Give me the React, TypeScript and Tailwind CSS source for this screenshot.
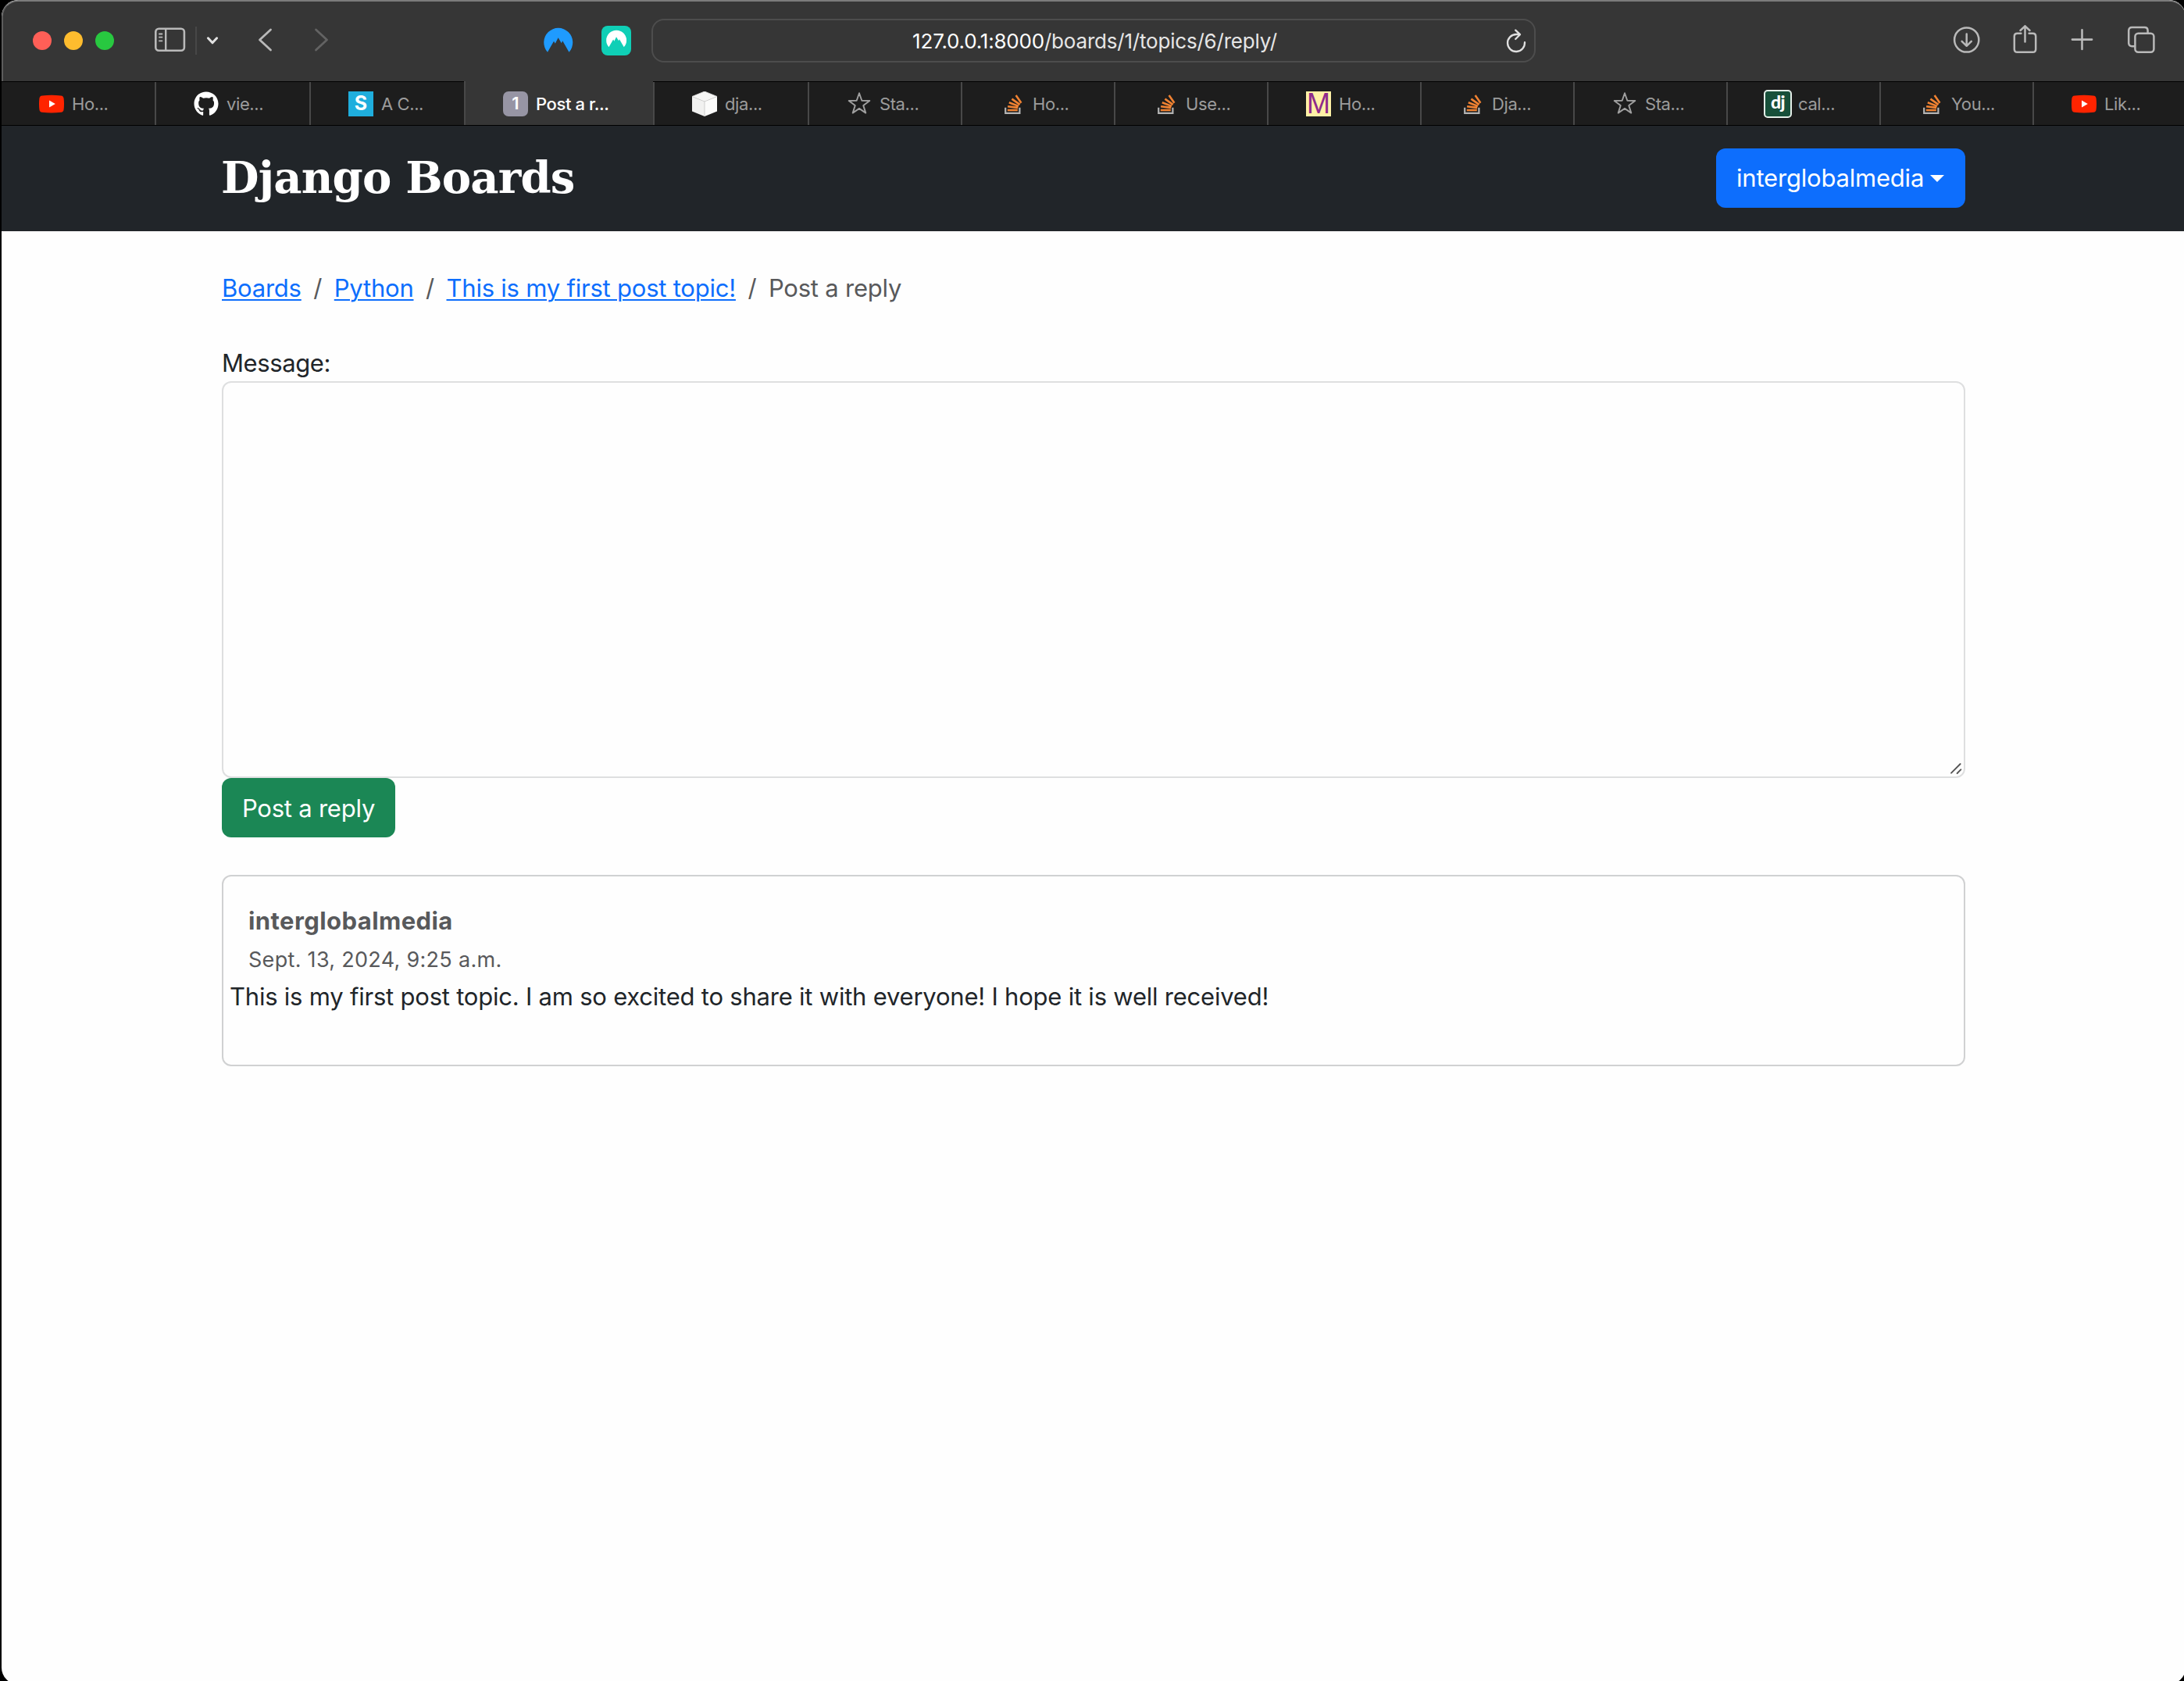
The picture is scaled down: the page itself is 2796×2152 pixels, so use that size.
import type { ReactNode } from "react";
import { FaGithub } from "react-icons/fa";

const NORD_PATH =
  "M5 30.7A18.5 18.5 0 1 1 32.5 30.7L24.2 16.3L22.8 19.2L18.6 12.2L14.8 19.8L13 16.7Z";

function YouTubeIcon() {
  return (
    <svg viewBox="0 0 32 32" className="size-8">
      <path d="M4 5.4Q16 4 28 5.4Q31.2 5.8 31.6 9Q32.4 16 31.6 23Q31.2 26.4 28 26.8Q16 28.2 4 26.8Q.8 26.4 .4 23Q-.4 16 .4 9Q.8 5.8 4 5.4Z" fill="#ff2400" />
      <path d="M13 11.4L20.8 16L13 20.6Z" fill="#fff" />
    </svg>
  );
}

function StarIcon() {
  return (
    <svg viewBox="0 0 32 32" className="size-8" fill="none" stroke="#a0a0a0" strokeWidth="1.9" strokeLinejoin="round">
      <path d="M16 2.2L19.3 11.8L29.3 12L21.3 18.1L24.3 27.6L16 21.9L7.7 27.6L10.7 18.1L2.7 12L12.7 11.8Z" />
    </svg>
  );
}

function StackIcon() {
  return (
    <svg viewBox="0 0 32 32" className="size-8" fill="none" strokeWidth="2.6">
      <path d="M7.2 20.8V27.9H25.4V20.8" stroke="#b4b4b4" strokeWidth="2.2" />
      <path
        d="M9.8 24H22.8M10.1 19.2L23.2 20.9M11.8 14.3L24 18.9M15.4 9.6L25.6 16.9M20.6 5L27.4 14.8"
        stroke="#f08232"
      />
    </svg>
  );
}

function CubeIcon() {
  return (
    <svg viewBox="0 0 32 32" className="size-8" strokeLinejoin="round">
      <path d="M0 6.5L16 13V32L0 25.5Z" fill="#f1f1f0" />
      <path d="M32 6.5L16 13V32L32 25.5Z" fill="#fbfbfa" />
      <path d="M0 6.5L16 0L32 6.5L16 13Z" fill="#f7f7f6" stroke="#d9d9d8" strokeWidth=".8" />
      <path d="M16 13V32" stroke="#c9c9c8" strokeWidth=".9" />
    </svg>
  );
}

type Tab = { label: string; icon: ReactNode; width: string; active?: boolean };

const tabs: Tab[] = [
  { label: "Ho...", icon: <YouTubeIcon />, width: "w-[196px] border-l-0" },
  { label: "vie...", icon: <FaGithub className="size-8 text-white" />, width: "w-[198px]" },
  {
    label: "A C...",
    icon: <span className="flex size-8 items-center justify-center bg-[#1faedd] text-[25px] font-bold text-white">S</span>,
    width: "w-[198px]",
  },
  {
    label: "Post a r...",
    icon: <span className="flex size-8 items-center justify-center rounded-[7px] bg-[#9795a4] text-[22px] font-semibold text-white">1</span>,
    width: "w-[242px]",
    active: true,
  },
  { label: "dja...", icon: <CubeIcon />, width: "w-[198px]" },
  { label: "Sta...", icon: <StarIcon />, width: "w-[196px]" },
  { label: "Ho...", icon: <StackIcon />, width: "w-[196px]" },
  { label: "Use...", icon: <StackIcon />, width: "w-[196px]" },
  {
    label: "Ho...",
    icon: (
      <span className="flex size-8 items-center justify-center bg-[#fff1a6] font-['Liberation_Sans'] text-[36px] leading-8 text-[#8e2a8b]">
        M
      </span>
    ),
    width: "w-[196px]",
  },
  { label: "Dja...", icon: <StackIcon />, width: "w-[196px]" },
  { label: "Sta...", icon: <StarIcon />, width: "w-[196px]" },
  {
    label: "cal...",
    icon: (
      <span className="-mx-0.5 flex size-9 shrink-0 items-center justify-center rounded-[5px] border-2 border-[#e4efe9] bg-[#17503a] pb-1 font-[Lato] text-[23px] leading-none font-black tracking-[-0.5px] text-white">
        dj
      </span>
    ),
    width: "w-[196px]",
  },
  { label: "You...", icon: <StackIcon />, width: "w-[196px]" },
  { label: "Lik...", icon: <YouTubeIcon />, width: "w-[196px]" },
];

function Toolbar() {
  return (
    <div className="flex h-[104px] items-center rounded-t-[21px] border-t-2 border-l-2 border-t-[#7b7b7b] border-l-[#5c5c5c] bg-[#363636]">
      <div className="flex w-full items-center pb-0.5">
        <div className="ml-[38px] flex gap-4">
          <span className="size-6 rounded-full bg-[#ff5f57]" />
          <span className="size-6 rounded-full bg-[#febc2e]" />
          <span className="size-6 rounded-full bg-[#28c840]" />
        </div>
        <svg viewBox="0 0 44 40" className="ml-[50px] h-10 w-11" fill="none" stroke="#b9b9b9" strokeWidth="2.6">
          <rect x="3.3" y="4.8" width="36.6" height="28" rx="4" />
          <path d="M16.2 4.8V32.8" strokeWidth="2.4" />
          <path d="M7.2 11.5H12.2M7.2 15.7H12.2M7.2 20.3H12.2" strokeWidth="1.8" />
        </svg>
        <span className="ml-2.5 h-9 w-0.5 bg-[#474747]" />
        <svg viewBox="0 0 20 40" className="ml-2.5 h-10 w-5" fill="none" stroke="#e2e2e2" strokeWidth="3" strokeLinecap="round" strokeLinejoin="round">
          <path d="M4.4 16.8L10 22.8L15.6 16.8" />
        </svg>
        <svg viewBox="0 0 24 40" className="ml-[46px] h-10 w-6" fill="none" stroke="#b9b9b9" strokeWidth="2.8" strokeLinecap="round" strokeLinejoin="round">
          <path d="M18.5 6L4.5 19L18.5 32" />
        </svg>
        <svg viewBox="0 0 24 40" className="ml-[48px] h-10 w-6" fill="none" stroke="#636363" strokeWidth="2.8" strokeLinecap="round" strokeLinejoin="round">
          <path d="M4.5 6L18.5 19L4.5 32" />
        </svg>
        <svg viewBox="0 0 38 40" className="ml-[272px] h-10 w-[38px]">
          <path d={NORD_PATH} transform="translate(0 4)" fill="#1f9bff" />
        </svg>
        <svg viewBox="0 0 38 38" className="ml-9 h-[38px] w-[38px]">
          <rect width="38" height="38" rx="8" fill="#0fcfb6" />
          <path d={NORD_PATH} transform="translate(6 5.8) scale(.7)" fill="#fff" />
        </svg>
        <div className="ml-[26px] flex h-14 w-[1132px] items-center rounded-2xl border-2 border-[#4d4d4d] pt-0.5 pl-[41px]">
          <div className="flex-1 text-center text-[26px] leading-8 tracking-[-0.2px] text-[#e6e6e6]">
            <span className="text-white">127.0.0.1:8000</span>/boards/1/topics/6/reply/
          </div>
          <svg viewBox="0 0 32 40" className="mr-[6px] -mt-1 h-10 w-8 shrink-0" fill="none" stroke="#e0e0e0" strokeWidth="2.3" strokeLinecap="round" strokeLinejoin="round">
            <path d="M26 23.2A11 11 0 1 1 15 13H19.6M14.2 7.6L20 13.2L14.2 19" />
          </svg>
        </div>
        <svg viewBox="0 0 40 40" className="ml-[530px] size-10" fill="none" stroke="#b9b9b9" strokeWidth="2.5" strokeLinecap="round" strokeLinejoin="round">
          <circle cx="21.7" cy="19" r="15.6" />
          <path d="M21.7 11.5V26.5M15.6 20.8L21.7 26.8L27.8 20.8" />
        </svg>
        <svg viewBox="0 0 40 40" className="ml-[36px] size-10" fill="none" stroke="#b9b9b9" strokeWidth="2.5" strokeLinecap="round" strokeLinejoin="round">
          <path d="M15.4 10.8H10.6Q6.8 10.8 6.8 14.6V31Q6.8 34.8 10.6 34.8H30.4Q34.2 34.8 34.2 31V14.6Q34.2 10.8 30.4 10.8H25.6" />
          <path d="M20.5 21.5V1.3M14.5 7L20.5 1.3L26.5 7" />
        </svg>
        <svg viewBox="0 0 40 40" className="ml-[33px] size-10" fill="none" stroke="#b9b9b9" strokeWidth="2.6" strokeLinecap="round">
          <path d="M20.5 6.2V31M7.9 18.6H33.1" />
        </svg>
        <svg viewBox="0 0 40 40" className="ml-[35px] size-10" fill="none" stroke="#b9b9b9" strokeWidth="2.5">
          <path d="M13 27.2H9.4Q5.2 27.2 5.2 23V7.2Q5.2 3 9.4 3H25.4Q29.6 3 29.6 7.2V10.6" />
          <rect x="13.4" y="10.8" width="24" height="24" rx="4" />
        </svg>
      </div>
    </div>
  );
}

function TabStrip() {
  return (
    <div className="flex h-[57px] border-b border-black">
      {tabs.map((tab, i) => (
        <div
          key={i}
          className={`flex shrink-0 flex-col border-l-[#484848] ${tab.width} ${tab.active ? "bg-[#363636]" : "bg-[#1d1d1d]"} ${i === 0 ? "" : "border-l-2"}`}
        >
          <div className={`h-px ${tab.active ? "" : "-ml-0.5 bg-black"}`} />
          <div className="flex flex-1 items-center gap-[10px] pl-12">
            <span className="flex w-8 shrink-0 justify-center">{tab.icon}</span>
            <span
              className={`text-[22px] leading-7 tracking-[-0.4px] whitespace-nowrap ${tab.active ? "font-medium text-white" : "text-[#9c9c9c]"}`}
            >
              {tab.label}
            </span>
          </div>
        </div>
      ))}
    </div>
  );
}

function SiteHeader() {
  return (
    <header className="flex h-[135px] items-center justify-between bg-[#212529] px-[282px]">
      <a className="-ml-px pb-[3px] font-['DejaVu_Serif'] text-[56px] leading-[66px] font-bold tracking-[-0.8px] text-white">Django Boards</a>
      <button className="mb-px flex h-[76px] w-[319px] items-center rounded-xl bg-[#0d6efd] pl-[26px] text-[31px] leading-[48px] tracking-[-0.2px] text-white">
        interglobalmedia
        <span className="ml-2 border-x-[9.6px] border-t-[9.6px] border-x-transparent border-t-white" />
      </button>
    </header>
  );
}

const crumbs = ["Boards", "Python", "This is my first post topic!"];

function Breadcrumb() {
  return (
    <nav className="flex h-12 pt-px text-[31px] leading-[48px] tracking-[-0.22px] text-[#58595b]">
      {crumbs.map((c) => (
        <span key={c} className="flex">
          <a className="text-[#0d6efd] underline decoration-2 underline-offset-[3px]">{c}</a>
          <span className="w-[42px] text-center">/</span>
        </span>
      ))}
      <span>Post a reply</span>
    </nav>
  );
}

export default function App() {
  return (
    <div className="h-[2152px] w-full overflow-hidden bg-black pl-0.5">
      <div className="h-[2156px] w-[2796px] overflow-hidden rounded-[21px] bg-[#fefefe] font-[Inter,sans-serif]">
        <Toolbar />
        <TabStrip />
        <SiteHeader />
        <main className="ml-[282px] w-[2232px] pt-12 text-[#212529]">
          <Breadcrumb />
          <label className="mt-12 block h-12 pt-px text-[31px] leading-[48px] tracking-[-0.4px]">Message:</label>
          <div className="flex h-[508px] items-end justify-end rounded-xl border-2 border-[#dedfe0]">
            <svg viewBox="0 0 18 18" className="mr-px mb-px size-[18px]" stroke="#555" strokeWidth="1.9" strokeLinecap="round">
              <path d="M3 14.6L14.6 3M10.6 15L15.4 10.2" />
            </svg>
          </div>
          <button className="flex h-[76px] w-[222px] items-center justify-center rounded-xl bg-[#1b8755] pt-0.5 text-[31px] leading-[48px] tracking-[-0.22px] text-white">
            Post a reply
          </button>
          <article className="mt-12 h-[245px] rounded-xl border-2 border-[#d0d1d2] pt-[33px]">
            <div className="pl-8 text-[#58595b]">
              <div className="text-[31px] leading-[48px] font-bold tracking-[0.42px]">interglobalmedia</div>
              <div className="mt-[5px] text-[27px] leading-[42px] tracking-[0.3px]">Sept. 13, 2024, 9:25 a.m.</div>
            </div>
            <p className="mt-0.5 pl-2 text-[31px] leading-[48px] tracking-[-0.22px]">
              This is my first post topic. I am so excited to share it with everyone! I hope it is well received!
            </p>
          </article>
        </main>
      </div>
    </div>
  );
}
